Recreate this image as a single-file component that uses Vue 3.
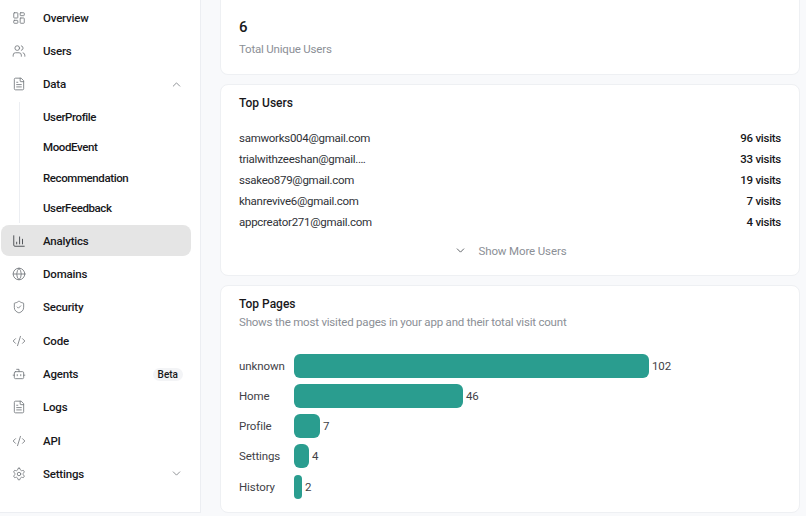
<script setup>
const topUsers = [
  { email: 'samworks004@gmail.com', visits: 96 },
  { email: 'trialwithzeeshan@gmail.…', visits: 33 },
  { email: 'ssakeo879@gmail.com', visits: 19 },
  { email: 'khanrevive6@gmail.com', visits: 7 },
  { email: 'appcreator271@gmail.com', visits: 4 },
]
const pages = [
  { name: 'unknown', value: 102, width: 355 },
  { name: 'Home', value: 46, width: 169 },
  { name: 'Profile', value: 7, width: 26 },
  { name: 'Settings', value: 4, width: 15 },
  { name: 'History', value: 2, width: 8 },
]
const subItems = ['UserProfile', 'MoodEvent', 'Recommendation', 'UserFeedback']
</script>

<template>
  <div class="page">
    <aside class="sidebar">
      <div class="item">
        <svg class="icon" viewBox="0 0 24 24"><rect x="3" y="3" width="7" height="9" rx="1"/><rect x="14" y="3" width="7" height="5" rx="1"/><rect x="14" y="12" width="7" height="9" rx="1"/><rect x="3" y="16" width="7" height="5" rx="1"/></svg>
        <span>Overview</span>
      </div>
      <div class="item">
        <svg class="icon" viewBox="0 0 24 24"><path d="M16 21v-2a4 4 0 0 0-4-4H6a4 4 0 0 0-4 4v2"/><circle cx="9" cy="7" r="4"/><path d="M22 21v-2a4 4 0 0 0-3-3.87"/><path d="M16 3.13a4 4 0 0 1 0 7.75"/></svg>
        <span>Users</span>
      </div>
      <div class="item">
        <svg class="icon" viewBox="0 0 24 24"><path d="M15 2H6a2 2 0 0 0-2 2v16a2 2 0 0 0 2 2h12a2 2 0 0 0 2-2V7z"/><path d="M14 2v5a1 1 0 0 0 1 1h5"/><path d="M8 13h8M8 17h8M8 9h2"/></svg>
        <span>Data</span>
        <svg class="chev" viewBox="0 0 24 24"><path d="m18 15-6-6-6 6"/></svg>
      </div>
      <div class="subs">
        <div v-for="s in subItems" :key="s" class="sub">{{ s }}</div>
      </div>
      <div class="item active">
        <svg class="icon dark" viewBox="0 0 24 24"><path d="M3 3v16a2 2 0 0 0 2 2h16"/><path d="M18 17V9M13 17V5M8 17v-3"/></svg>
        <span>Analytics</span>
      </div>
      <div class="item">
        <svg class="icon" viewBox="0 0 24 24"><circle cx="12" cy="12" r="10"/><path d="M12 2a14.5 14.5 0 0 0 0 20 14.5 14.5 0 0 0 0-20"/><path d="M2 12h20"/></svg>
        <span>Domains</span>
      </div>
      <div class="item">
        <svg class="icon" viewBox="0 0 24 24"><path d="M20 13c0 5-3.5 7.5-7.66 8.95a1 1 0 0 1-.67-.01C7.5 20.5 4 18 4 13V6a1 1 0 0 1 1-1c2 0 4.5-1.2 6.24-2.72a1.17 1.17 0 0 1 1.52 0C14.51 3.81 17 5 19 5a1 1 0 0 1 1 1z"/><path d="m9 12 2 2 4-4"/></svg>
        <span>Security</span>
      </div>
      <div class="item">
        <svg class="icon" viewBox="0 0 24 24"><path d="m18 16 4-4-4-4M6 8l-4 4 4 4M14.5 4l-5 16"/></svg>
        <span>Code</span>
      </div>
      <div class="item">
        <svg class="icon" viewBox="0 0 24 24"><path d="M12 8V4H8"/><rect x="4" y="8" width="16" height="12" rx="2"/><path d="M2 14h2M20 14h2M15 13v2M9 13v2"/></svg>
        <span>Agents</span>
        <em class="badge">Beta</em>
      </div>
      <div class="item">
        <svg class="icon" viewBox="0 0 24 24"><path d="M15 2H6a2 2 0 0 0-2 2v16a2 2 0 0 0 2 2h12a2 2 0 0 0 2-2V7z"/><path d="M14 2v5a1 1 0 0 0 1 1h5"/><path d="M8 13h8M8 17h8M8 9h2"/></svg>
        <span>Logs</span>
      </div>
      <div class="item">
        <svg class="icon" viewBox="0 0 24 24"><path d="m18 16 4-4-4-4M6 8l-4 4 4 4M14.5 4l-5 16"/></svg>
        <span>API</span>
      </div>
      <div class="item">
        <svg class="icon" viewBox="0 0 24 24"><path d="M12.22 2h-.44a2 2 0 0 0-2 2v.18a2 2 0 0 1-1 1.73l-.43.25a2 2 0 0 1-2 0l-.15-.08a2 2 0 0 0-2.73.73l-.22.38a2 2 0 0 0 .73 2.73l.15.1a2 2 0 0 1 1 1.72v.51a2 2 0 0 1-1 1.74l-.15.09a2 2 0 0 0-.73 2.73l.22.38a2 2 0 0 0 2.73.73l.15-.08a2 2 0 0 1 2 0l.43.25a2 2 0 0 1 1 1.73V20a2 2 0 0 0 2 2h.44a2 2 0 0 0 2-2v-.18a2 2 0 0 1 1-1.73l.43-.25a2 2 0 0 1 2 0l.15.08a2 2 0 0 0 2.73-.73l.22-.39a2 2 0 0 0-.73-2.73l-.15-.08a2 2 0 0 1-1-1.74v-.5a2 2 0 0 1 1-1.74l.15-.09a2 2 0 0 0 .73-2.73l-.22-.38a2 2 0 0 0-2.73-.73l-.15.08a2 2 0 0 1-2 0l-.43-.25a2 2 0 0 1-1-1.73V4a2 2 0 0 0-2-2z"/><circle cx="12" cy="12" r="3"/></svg>
        <span>Settings</span>
        <svg class="chev" viewBox="0 0 24 24"><path d="m6 9 6 6 6-6"/></svg>
      </div>
    </aside>

    <main class="main">
      <section class="card stat">
        <div class="number">6</div>
        <div class="muted">Total Unique Users</div>
      </section>

      <section class="card users">
        <h2>Top Users</h2>
        <ul class="user-list">
          <li v-for="u in topUsers" :key="u.email">
            <span>{{ u.email }}</span>
            <b>{{ u.visits }} visits</b>
          </li>
        </ul>
        <div class="more">
          <svg viewBox="0 0 24 24"><path d="m6 9 6 6 6-6"/></svg>
          <span>Show More Users</span>
        </div>
      </section>

      <section class="card pages">
        <h2>Top Pages</h2>
        <p class="muted">Shows the most visited pages in your app and their total visit count</p>
        <div class="chart">
          <div v-for="p in pages" :key="p.name" class="row">
            <span class="label">{{ p.name }}</span>
            <div class="bar" :style="{ width: p.width + 'px' }"></div>
            <span class="value">{{ p.value }}</span>
          </div>
        </div>
      </section>
    </main>
  </div>
</template>

<style scoped>
.page {
  width: 806px;
  height: 516px;
  display: flex;
  align-items: flex-start;
  overflow: hidden;
  background: #f8f9fb;
  font-family: Roboto, "Liberation Sans", sans-serif;
  font-size: 11.5px;
  color: #18181b;
}
.sidebar {
  width: 201px;
  height: 513px;
  flex: none;
  box-sizing: border-box;
  padding: 2px 9px 0 1px;
  background: #fff;
  border-right: 1px solid #eceef2;
  border-bottom: 1px solid #eceef2;
}
.item {
  height: 31px;
  margin-bottom: 2.35px;
  display: flex;
  align-items: center;
  padding: 0 8px 0 11px;
  border-radius: 8px;
  font-weight: 500;
  letter-spacing: -0.2px;
}
.item > span {
  margin-left: 12px;
  flex: 1;
}
.active {
  background: #e5e5e5;
}
.icon {
  width: 14px;
  height: 14px;
  margin-right: 5px;
  flex: none;
  fill: none;
  stroke: #777b80;
  stroke-width: 1.5;
  stroke-linecap: round;
  stroke-linejoin: round;
}
.icon.dark {
  stroke: #3f4247;
}
.chev {
  width: 13px;
  height: 13px;
  flex: none;
  fill: none;
  stroke: #777b80;
  stroke-width: 1.5;
  stroke-linecap: round;
  stroke-linejoin: round;
}
.subs {
  margin: 0 0 2.3px 18px;
  padding-left: 23px;
  border-left: 1px solid #eceef2;
}
.sub {
  height: 30.2px;
  display: flex;
  align-items: center;
  font-weight: 500;
  letter-spacing: -0.4px;
}
.badge {
  font-style: normal;
  font-size: 10px;
  font-weight: 500;
  letter-spacing: 0;
  background: #f3f4f6;
  border-radius: 8px;
  padding: 1px 5px;
  margin-top: 1px;
}
.main {
  flex: 1;
  min-width: 0;
  padding-left: 19px;
  padding-right: 6px;
  display: flex;
  flex-direction: column;
  gap: 9px;
}
.card {
  background: #fff;
  border: 1px solid #eef0f3;
  border-radius: 8px;
  box-sizing: border-box;
  padding: 0 18px;
}
.stat {
  height: 75px;
  border-top: none;
  border-radius: 0 0 8px 8px;
  padding-top: 18px;
}
.number {
  font-size: 15px;
  font-weight: 500;
  line-height: 18px;
}
.muted {
  color: #8b8f96;
  font-size: 11.5px;
  line-height: 16px;
  margin: 0;
  letter-spacing: -0.2px;
}
.stat .muted {
  margin-top: 5px;
}
h2 {
  margin: 0;
  font-size: 12px;
  font-weight: 500;
  line-height: 16px;
}
.users {
  height: 192px;
  padding-top: 10px;
}
.user-list {
  list-style: none;
  margin: 16px 0 0;
  padding: 0;
}
.user-list li {
  height: 21.2px;
  display: flex;
  justify-content: space-between;
  align-items: center;
  font-size: 11.5px;
  color: #2f3237;
  letter-spacing: -0.28px;
}
.user-list b {
  font-weight: 500;
  color: #18181b;
}
.more {
  display: flex;
  justify-content: center;
  align-items: center;
  gap: 12px;
  margin-top: 8px;
  color: #8b8f96;
  font-size: 11.5px;
  letter-spacing: -0.13px;
  height: 20px;
}
.more svg {
  width: 13px;
  height: 13px;
  fill: none;
  stroke: #5f6368;
  stroke-width: 1.8;
  stroke-linecap: round;
  stroke-linejoin: round;
}
.pages {
  height: 228px;
  padding-top: 10px;
}
.pages .muted {
  margin-top: 2px;
}
.chart {
  margin-top: 23.8px;
  display: flex;
  flex-direction: column;
  gap: 6.2px;
}
.row {
  height: 24px;
  display: flex;
  align-items: center;
  font-size: 11.5px;
  color: #3f4247;
  letter-spacing: -0.1px;
}
.label {
  width: 55px;
  flex: none;
}
.bar {
  height: 24px;
  background: #2a9d8f;
  border-radius: 6px;
  flex: none;
}
.value {
  margin-left: 3px;
}
</style>
